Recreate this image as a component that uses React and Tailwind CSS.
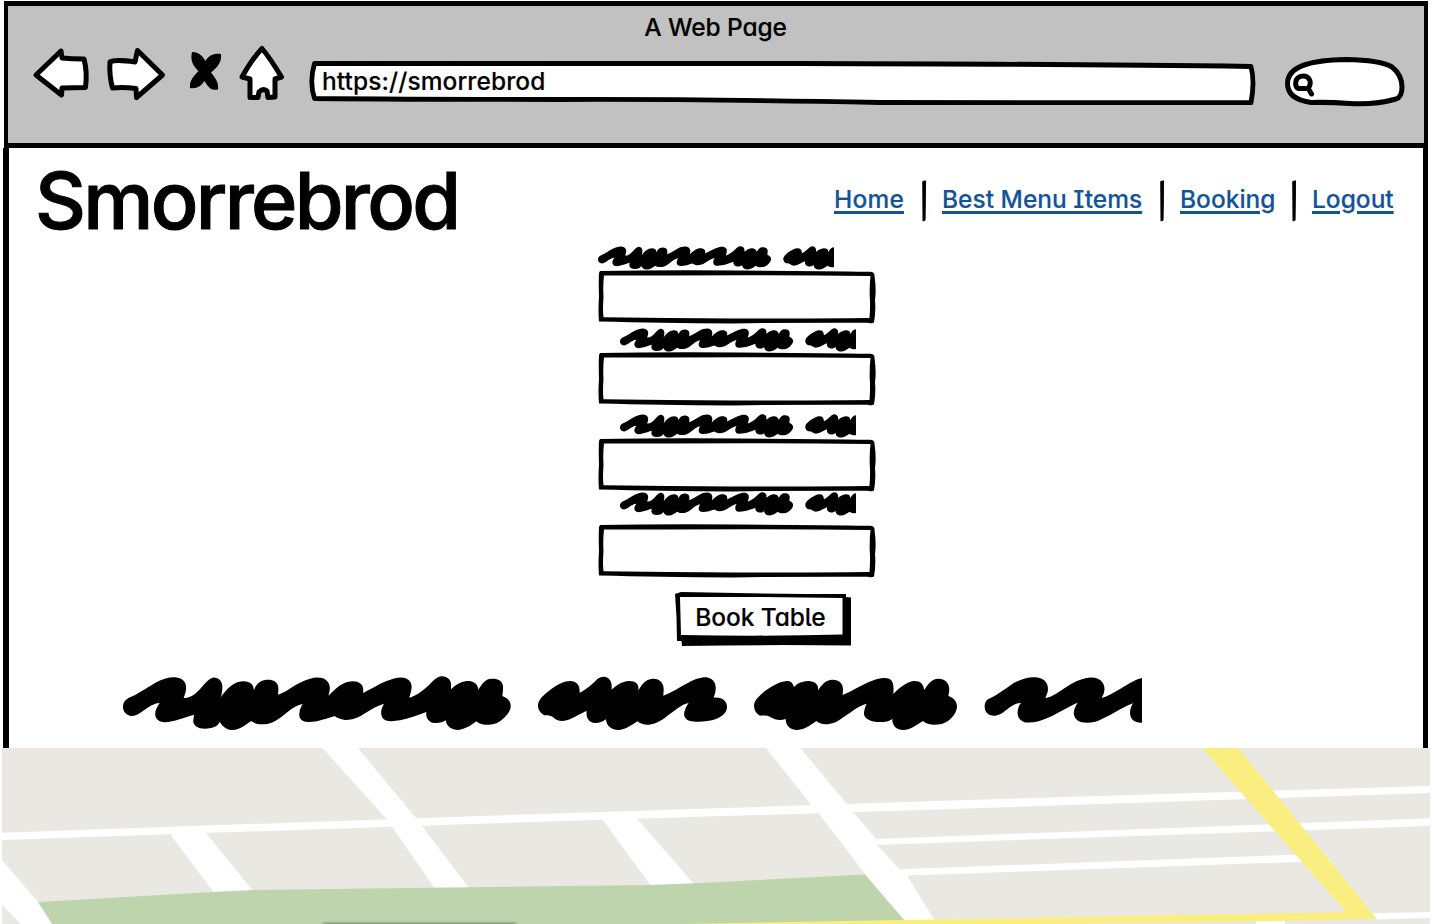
import React from "react";

const FONT =
  "font-['Inter','Open_Sans',sans-serif] [font-feature-settings:'cv11','ss03','cv08','ss04'] font-medium whitespace-nowrap";

const STROKES = [
  [0, "M39 126C39 112 47 103 60 97C85 86 105 72 135 54C160 40 185 34 203 38C222 42 230 55 228 73C227 85 223 92 221 99C245 100 258 85 275 67C288 53 300 36 315 38C330 40 338 52 337 68C337 82 334 88 333 96C345 80 360 60 382 52C400 46 415 48 424 56C430 62 431 70 432 76C437 60 448 48 465 45C485 41 500 48 504 62C506 72 505 82 504 89C525 83 545 65 570 53C595 40 620 34 636 39C652 43 662 58 659 75C658 83 656 88 656 92C672 75 690 57 712 51C730 46 745 48 755 59C761 67 760 76 759 84C785 72 805 57 830 48C850 40 872 34 887 40C902 46 907 58 904 74C902 86 899 92 898 98C920 93 945 72 960 57C973 45 982 33 997 34C1012 35 1022 44 1023 56L1023 73C1035 62 1050 50 1070 48C1085 46 1100 52 1104 68L1104 75C1112 65 1122 45 1138 42C1160 38 1176 46 1179 62C1180 74 1178 84 1177 93C1192 99 1203 108 1202 125C1201 140 1188 153 1175 165C1160 178 1140 180 1125 179C1112 178 1105 174 1099 169C1085 180 1065 193 1045 195C1025 195 1010 185 1007 166C998 173 985 175 973 174C958 172 946 160 949 141C925 150 900 160 870 166C845 170 825 170 817 158C810 145 814 130 822 116C800 122 780 135 760 148C745 158 725 166 705 165C690 163 680 158 674 153C650 160 620 172 595 171C575 170 566 160 568 145C569 133 573 125 578 117C555 120 535 140 515 155C495 170 480 178 455 178C440 178 430 173 424 168C408 178 390 195 368 195C350 195 338 185 329 170C325 182 310 190 285 191C262 191 248 180 250 165L252 149C230 155 205 166 175 171C155 173 140 168 136 152C134 138 140 128 149 114C130 115 115 127 103 135C90 145 78 153 66 153C48 152 39 140 39 126Z"],
  [1260, "M24 122C24 105 40 90 60 75C80 60 100 48 120 48C140 48 150 60 149 83C165 77 190 55 202 42C215 33 228 34 235 40C245 50 246 60 245 74C260 60 275 50 297 48C318 48 328 58 325 76C335 60 345 42 368 41C390 40 402 55 401 75L400 92C425 83 450 65 475 53C495 42 520 34 535 38C552 42 559 58 557 75C556 86 552 92 551 98C575 95 592 108 591 127C590 145 575 155 558 162C535 170 500 173 480 168C463 163 459 150 465 135C468 125 472 120 476 114C455 117 430 140 405 158C385 172 370 179 350 179C338 179 328 174 322 169C305 180 285 195 265 195C245 195 228 182 228 163C215 172 205 175 195 174C178 173 167 160 170 138C155 143 130 160 110 166C95 170 82 168 73 160C62 150 52 151 43 151C32 144 24 135 24 122Z"],
  [1260, "M672 122C672 105 690 90 708 76C730 60 755 47 775 48C785 50 789 57 792 66C805 52 825 46 842 49C860 53 866 62 864 76C875 60 885 46 905 44C928 43 938 55 939 72L938 90C960 82 985 65 1015 52C1040 40 1065 36 1077 41C1090 47 1092 62 1090 86C1105 73 1125 52 1150 48C1170 47 1182 57 1182 75C1192 62 1202 43 1222 41C1245 40 1258 53 1258 75L1255 93C1272 99 1282 110 1281 127C1279 150 1255 172 1235 177C1212 181 1192 180 1179 168C1160 180 1140 195 1120 195C1098 195 1086 180 1087 162C1075 171 1060 172 1040 171C1015 168 1000 158 1002 143C1003 132 1006 124 1010 116C985 122 965 140 940 157C920 172 905 178 888 178C874 177 865 173 859 168C840 182 820 195 800 195C780 194 767 182 767 162C750 167 735 165 722 157C710 150 700 152 690 152C678 145 672 135 672 122Z"],
  [2550, "M74 124C74 110 80 103 92 99C115 88 135 72 160 55C185 42 210 34 235 38C258 42 267 60 263 80C261 88 258 93 256 99C275 97 300 78 325 62C350 46 380 34 403 38C425 42 436 58 433 77C431 88 428 93 425 99C450 92 480 72 510 54C525 46 535 42 546 39L546 173C525 174 510 163 510 143C510 132 514 124 519 115C495 122 460 148 430 160C410 172 385 176 365 172C345 166 339 150 342 138C345 125 349 120 353 113C330 122 295 145 260 160C235 172 205 176 190 170C172 162 171 145 174 133C176 124 179 118 183 114C165 113 145 130 130 142C118 151 105 154 92 151C80 147 74 138 74 124Z"],
];

function Scribble({ length, className }) {
  return (
    <svg viewBox={`39 33 ${length} 165`} className={"block shrink-0 " + className} preserveAspectRatio="none" aria-hidden="true">
      {STROKES.map(([x, d], i) => (
        <path key={i} d={d} transform={`translate(${x} 0)`} />
      ))}
    </svg>
  );
}

function Field({ label, className }) {
  return (
    <div className={"flex flex-col justify-between " + className}>
      <Scribble length={1586} className={"h-[24px] w-[236px] " + label} />
      <div className="relative h-[54px] w-[278px] shrink-0">
        <svg viewBox="0 0 278 54" className="absolute inset-0 h-full w-full" aria-hidden="true">
          <path
            fillRule="evenodd"
            d="M2 1Q60 0 140 .5T272 1.7Q277 2 276.500 6Q278.500 20 277 30Q278 42 276 52.500Q274 54 270 52.800Q200 52.500 135 53.500Q60 53 1 51.500Q0 40 1 27Q.5 12 1 3ZM6 5.500Q4.800 16 5.500 27Q4.500 40 5.500 47.300Q70 48.300 135 48.500Q220 48.500 271.500 48Q272.500 36 271.700 26Q271.500 14 272.500 6Q210 5.500 150 5.300Q60 5.500 6 5.500Z"
          />
        </svg>
        <input className="relative h-full w-full bg-transparent px-4 outline-none" aria-label="Field" />
      </div>
    </div>
  );
}

const stroke = { fill: "#fff", stroke: "#000", strokeWidth: 5, strokeLinejoin: "round", strokeLinecap: "round" };

function Toolbar() {
  return (
    <div className="flex items-start">
      <svg viewBox="32 44 256 58" className="mt-px ml-[24px] h-[58px] w-[256px] shrink-0" aria-hidden="true">
        <path {...stroke} d="M61 51L36 75L61.500 95L62 88L85.500 87.500Q87.500 72 84 59Q72 59 62 58Z" />
        <path {...stroke} d="M137.500 50.500L162.500 75L136.500 97.500L136 88.500Q123 87 112.500 88Q109 75 110 62Q115 59 135 62Z" />
        <path d="M192 52C198 52 202 55 205.500 61C209 55 214 53 221 54C222 62 217 68 211 72.500C216 79 219 83 218 89.500C211 91 208 87 204.500 81C201 86 197 89 190 88C189 80 195 75 198.500 71C193 66 190 60 192 52Z" />
        <path {...stroke} d="M262 48.500Q270 58 281.500 77L275 79L275 97L268 97.500L267 91Q263 88 259 92L258 97.500L250 97.500L250 79L242 77Q252 59 262 48.500Z" />
      </svg>
      <div className="relative mt-[21px] ml-[19px] flex h-[42px] w-[949px] shrink-0 items-center">
        <svg viewBox="307 60 949 46" className="absolute -top-1 left-0 h-[46px] w-[949px]" aria-hidden="true">
          <path {...stroke} strokeWidth="4.800" d="M314.500 63.500Q600 62.500 800 63.500Q1080 64 1251 66.500Q1255 82 1251 102.700Q1050 103 880 102.500Q700 99 560 99.500Q420 99.500 314.500 98.500Q309 82 314.500 63.500Z" />
        </svg>
        <span className={FONT + " relative mb-[8px] ml-[15px] text-[24.500px] leading-6 tracking-[0.1px] [-webkit-text-stroke:0.150px_#000]"}>https://smorrebrod</span>
      </div>
      <svg viewBox="1283 54 124 54" className="mt-[11px] ml-[27px] h-[54px] w-[124px] shrink-0" aria-hidden="true">
        <path {...stroke} d="M1311 102.500Q1287 99 1287.500 83C1288 65 1314 60 1346 59.500Q1380 60 1392 67Q1402 75 1402 87Q1402 97 1396 99Q1375 105 1350 103.500Q1330 102 1311 102.500Z" />
        <path fill="none" stroke="#000" strokeWidth="5" strokeLinecap="round" strokeLinejoin="round" d="M1303 76C1294 76 1294 88 1299 88.500L1308 88.500C1313 82 1309 76 1303 76M1308 88L1311.500 94" />
      </svg>
    </div>
  );
}

function Divider() {
  return (
    <svg viewBox="0 0 4 42" className="h-[42px] w-1 shrink-0" aria-hidden="true">
      <path d="M.2 1.500Q2 0 4 .5Q4 20 3.600 40Q2 42 .5 41Z" />
    </svg>
  );
}

const LINK = FONT + " shrink-0 text-[24.500px] leading-8 text-[#13539a] underline decoration-[2.500px] underline-offset-[3px] [-webkit-text-stroke:0.150px_#13539a]";

function Nav() {
  return (
    <nav className="mt-[32px] mr-[30px] flex items-start">
      <a className={LINK + " mt-[3px] w-[71px] tracking-[0.2px]"}>Home</a>
      <div className="ml-[17px] mr-4 flex"><Divider /></div>
      <a className={LINK + " mt-[3px] w-[201px] tracking-[0px]"}>Best Menu Items</a>
      <div className="ml-[17px] mr-4 flex"><Divider /></div>
      <a className={LINK + " mt-[3px] w-[95px] tracking-[0px]"}>Booking</a>
      <div className="ml-[17px] mr-4 flex"><Divider /></div>
      <a className={LINK + " mt-[3px] w-[81px] tracking-[0px]"}>Logout</a>
    </nav>
  );
}

function StreetMap() {
  return (
    <svg viewBox="0 748 1440 176" className="block h-[176px] w-[1440px]" aria-hidden="true">
      <defs>
        <filter id="soft" x="-5%" y="-100%" width="110%" height="300%">
          <feGaussianBlur stdDeviation="1.500" />
        </filter>
      </defs>
      <path fill="#e9e8e3" d="M2 748H1430V924H2Z" />
      <g fill="#fff">
        <path d="M2 832.700L480 816L960 800.300L1430 786V793L960 808.700L480 823.700L2 840Z" />
        <path d="M322.500 748H358L416 818L422 826L469 888H434.500L393 828.500L387 819.500Z" />
        <path d="M171 835.500L176 832H205L207 834L253 891L213.500 892Z" />
        <path d="M2 860L38 902L53 924H21L2 905Z" />
        <path d="M602.500 819.500L637 818.500L694 884L651 886Z" />
        <path d="M766 748H800.500L847 804L853 812L876 839L877 845L899 869L907 875.500L935 921L904 922L865 874L818 812.500L811 804.500Z" />
        <path d="M875 839L960 835.700L1430 818.300V826L960 842L877 845Z" />
        <path d="M898 869.300L960 867L1295 854.700L1328 858L1332 862L1304 861.700L960 873.700L905 875.500Z" />
        <path d="M1360 913.500L1430 912V918L1376 919.500Z" />
        <path d="M1256 921H1285V924H1256Z" />
      </g>
      <path fill="#bdd4ad" d="M38 902L213 892L253 890L469 887.300L651 885L694 883.300L865 874.500L905 921V924H52Z" />
      <path fill="#fbee80" d="M1202 748H1238.500L1377 919L1256 921.500L1030 924H680L960 919L1346 912Z" />
      <path fill="#5b6650" filter="url(#soft)" d="M323 923.500H516V930H323Z" />
    </svg>
  );
}

export default function App() {
  return (
    <div className="flex h-[924px] w-[1440px] flex-col overflow-hidden bg-white text-black">
      <header className="mt-px ml-1 h-[147px] w-[1424px] border-4 border-t-5 border-b-5 border-black bg-[#c1c1c1]">
        <div className={FONT + " mt-[5px] ml-[-1px] text-center text-[24.500px] leading-[32px] tracking-[-0.1px] [-webkit-text-stroke:0.150px_#000]"}>A Web Page</div>
        <Toolbar />
      </header>
      <main className="ml-[3px] flex h-[600px] w-[1425px] flex-col border-r-5 border-l-6 border-black">
        <div className="flex h-[98px] justify-between">
          <h1 className={FONT + " mt-[10px] ml-[26px] text-[79px] leading-[84px] tracking-[-2.700px] [-webkit-text-stroke:1px_#000]"}>Smorrebrod</h1>
          <Nav />
        </div>
        <form className="ml-[589px] flex flex-col items-start">
          <Field className="h-[78px]" label="" />
          <Field className="mt-[4px] h-[78px]" label="ml-[22px]" />
          <Field className="mt-[8px] h-[78px]" label="ml-[22px]" />
          <Field className="h-[86px]" label="ml-[22px]" />
          <button type="button" className="relative mt-[14px] ml-[77px] h-[54px] w-[177px]">
            <svg viewBox="0 0 177 54" className="absolute inset-0 h-full w-full" aria-hidden="true">
              <path d="M0 2L6 0Q90 2 171 2V5L176 5.500V53.500Q90 52.500 7 54L6.500 49H2Q2 25 0 2Z" />
              <path fill="#fff" d="M5 5Q90 4.500 167.500 6V42.500Q90 44.500 6 43Z" />
            </svg>
            <span className={FONT + " relative -top-[2px] -left-[3px] text-[24.500px] leading-8 tracking-[-0.1px] [-webkit-text-stroke:0.150px_#000]"}>Book Table</span>
          </button>
        </form>
        <Scribble length={3057} className="mt-[30px] ml-[114px] h-[55px] w-[1019px]" />
      </main>
      <StreetMap />
    </div>
  );
}
